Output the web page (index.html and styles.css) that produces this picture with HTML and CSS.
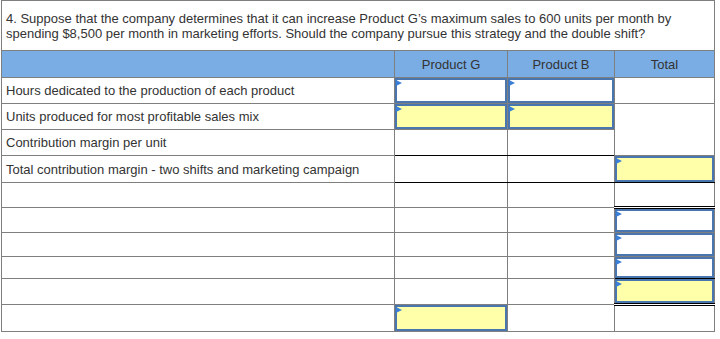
FILE: index.html
```html
<!DOCTYPE html>
<html>
<head>
<meta charset="utf-8">
<link rel="stylesheet" href="styles.css">
</head>
<body>
<table class="sheet">
  <colgroup>
    <col class="c-label"><col class="c-g"><col class="c-b"><col class="c-t">
  </colgroup>
  <tr class="row-q">
    <td colspan="4" class="question">4. Suppose that the company determines that it can increase Product G’s maximum sales to 600 units per month by spending $8,500 per month in marketing efforts. Should the company pursue this strategy and the double shift?</td>
  </tr>
  <tr class="row-head h26">
    <th><div class="lbl"></div></th>
    <th>Product G</th>
    <th>Product B</th>
    <th>Total</th>
  </tr>
  <tr class="h25">
    <td><div class="lbl">Hours dedicated to the production of each product</div></td>
    <td class="cell"><div class="inp"><span class="tri"></span></div></td>
    <td class="cell"><div class="inp"><span class="tri"></span></div></td>
    <td class="cell"></td>
  </tr>
  <tr class="h25">
    <td><div class="lbl">Units produced for most profitable sales mix</div></td>
    <td class="cell"><div class="inp yellow"><span class="tri"></span></div></td>
    <td class="cell"><div class="inp yellow"><span class="tri"></span></div></td>
    <td class="cell" rowspan="2"></td>
  </tr>
  <tr class="h25">
    <td><div class="lbl">Contribution margin per unit</div></td>
    <td class="cell black-b"></td>
    <td class="cell black-b"></td>
  </tr>
  <tr class="h26">
    <td><div class="lbl">Total contribution margin - two shifts and marketing campaign</div></td>
    <td class="cell black-b"></td>
    <td class="cell black-b"></td>
    <td class="cell black-b"><div class="inp yellow"><span class="tri"></span></div></td>
  </tr>
  <tr class="h24">
    <td><div class="lbl"></div></td>
    <td class="cell"></td>
    <td class="cell"></td>
    <td class="cell double-b"></td>
  </tr>
  <tr class="h23">
    <td><div class="lbl"></div></td>
    <td class="cell"></td>
    <td class="cell"></td>
    <td class="cell"><div class="inp"><span class="tri"></span></div></td>
  </tr>
  <tr class="h23">
    <td><div class="lbl"></div></td>
    <td class="cell"></td>
    <td class="cell"></td>
    <td class="cell"><div class="inp"><span class="tri"></span></div></td>
  </tr>
  <tr class="h21">
    <td><div class="lbl"></div></td>
    <td class="cell"></td>
    <td class="cell"></td>
    <td class="cell black-b"><div class="inp"><span class="tri"></span></div></td>
  </tr>
  <tr class="h24">
    <td><div class="lbl"></div></td>
    <td class="cell"></td>
    <td class="cell"></td>
    <td class="cell double-b"><div class="inp yellow"><span class="tri"></span></div></td>
  </tr>
  <tr class="h26">
    <td><div class="lbl"></div></td>
    <td class="cell"><div class="inp yellow"><span class="tri"></span></div></td>
    <td class="cell"></td>
    <td class="cell"></td>
  </tr>
</table>
</body>
</html>
```

FILE: styles.css
```css
html, body {
  margin: 0;
  padding: 0;
  background: #ffffff;
}

body {
  font-family: "Liberation Sans", Arial, sans-serif;
  color: #333333;
  padding-left: 1px;
}

.sheet {
  border-collapse: collapse;
  table-layout: fixed;
  width: 714px;
}

.c-label { width: 393px; }
.c-g { width: 113px; }
.c-b { width: 107px; }
.c-t { width: 100px; }

.sheet td,
.sheet th {
  border: 1px solid #7f7f7f;
  padding: 0;
  vertical-align: top;
}

.question {
  height: 49px;
  font-size: 13px;
  line-height: 15px;
  padding: 0 4px !important;
  vertical-align: middle !important;
  color: #333333;
}

.row-head th {
  background: #7aade4;
  font-weight: normal;
  font-size: 13px;
  text-align: center;
  vertical-align: middle;
  color: #333333;
}

.h26 { --h: 26px; }
.h25 { --h: 25px; }
.h24 { --h: 24px; }
.h23 { --h: 23px; }
.h21 { --h: 21px; }

.lbl {
  height: var(--h);
  display: flex;
  align-items: center;
  padding-left: 4px;
  font-size: 13px;
  color: #333333;
  white-space: nowrap;
}

.inp {
  height: var(--h);
  box-sizing: border-box;
  border: 2px solid #4a76b0;
  background: #ffffff;
}

.inp.yellow {
  background: #ffffaa;
}

.tri {
  display: block;
  width: 0;
  height: 0;
  margin-left: -1px;
  margin-top: 0;
  border-left: 6px solid #3a7ed6;
  border-top: 3px solid transparent;
  border-bottom: 3px solid transparent;
}

.sheet td.black-b {
  border-bottom: 1px solid #000000;
}

.sheet td.double-b {
  border-bottom: 3px double #000000;
}
```
